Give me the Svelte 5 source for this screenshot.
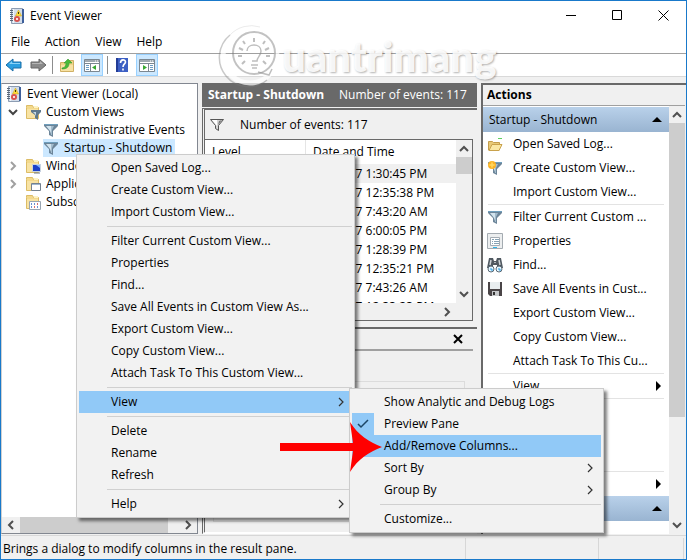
<script lang="ts">
	type MenuItem = {
		label?: string;
		separator?: boolean;
		submenu?: boolean;
		active?: boolean;
		checked?: boolean;
		icon?: string;
	};

	const separator: MenuItem = { separator: true };

	const menus = ["File", "Action", "View", "Help"];

	const tree = [
		{ label: "Event Viewer (Local)", level: 0, icon: "log" },
		{ label: "Custom Views", level: 1, icon: "folder-filter", open: true },
		{ label: "Administrative Events", level: 2, icon: "filter" },
		{ label: "Startup - Shutdown", level: 2, icon: "filter", selected: true },
		{ label: "Windows Logs", level: 1, icon: "folder-screen", open: false },
		{ label: "Applications and Services", level: 1, icon: "folder-window", open: false },
		{ label: "Subscriptions", level: 1, icon: "folder-calendar" },
	];

	const events = [
		"4/7/2017 1:30:45 PM",
		"4/6/2017 12:35:38 PM",
		"4/6/2017 7:43:20 AM",
		"4/5/2017 6:00:05 PM",
		"4/5/2017 1:28:39 PM",
		"4/5/2017 12:35:21 PM",
		"4/5/2017 7:43:26 AM",
		"4/4/2017 12:33:23 PM",
	];

	const actions: MenuItem[] = [
		{ label: "Open Saved Log...", icon: "open" },
		{ label: "Create Custom View...", icon: "filter-new" },
		{ label: "Import Custom View..." },
		separator,
		{ label: "Filter Current Custom ...", icon: "filter" },
		{ label: "Properties", icon: "properties" },
		{ label: "Find...", icon: "find" },
		{ label: "Save All Events in Cust...", icon: "save" },
		{ label: "Export Custom View..." },
		{ label: "Copy Custom View..." },
		{ label: "Attach Task To This Cu..." },
		separator,
		{ label: "View", submenu: true },
		separator,
		{ label: "Delete" },
		{ label: "Rename" },
		{ label: "Refresh" },
		separator,
		{ label: "Help", submenu: true },
	];

	const contextMenu: MenuItem[] = [
		{ label: "Open Saved Log..." },
		{ label: "Create Custom View..." },
		{ label: "Import Custom View..." },
		separator,
		{ label: "Filter Current Custom View..." },
		{ label: "Properties" },
		{ label: "Find..." },
		{ label: "Save All Events in Custom View As..." },
		{ label: "Export Custom View..." },
		{ label: "Copy Custom View..." },
		{ label: "Attach Task To This Custom View..." },
		separator,
		{ label: "View", submenu: true, active: true },
		separator,
		{ label: "Delete" },
		{ label: "Rename" },
		{ label: "Refresh" },
		separator,
		{ label: "Help", submenu: true },
	];

	const viewMenu: MenuItem[] = [
		{ label: "Show Analytic and Debug Logs" },
		{ label: "Preview Pane", checked: true },
		{ label: "Add/Remove Columns...", active: true },
		{ label: "Sort By", submenu: true },
		{ label: "Group By", submenu: true },
		separator,
		{ label: "Customize..." },
	];
</script>

{#snippet folder()}
	<path d="M1.5 3.5v-2h6l1 2h5v11h-12z" fill="#f3d98c" stroke="#dcbc66" />
	<path d="M2 5h11v9H2z" fill="#f8e3a4" />
	<path d="M9 2h4v2H9z" fill="#fff3c4" />
{/snippet}

{#snippet funnel()}
	<path d="M1 2h14v2l-5 5v6l-4-2V9L1 4z" fill="#6c8599" />
	<path d="M3 4h5v8L7 9z" fill="#d3e4ee" />
	<path d="M8 4h3L9 8v5H8z" fill="#a3bccd" />
	<path d="M1 2.5h14" stroke="#6f9fbd" />
{/snippet}

{#snippet icon(name: string)}
	<svg class="icon" viewBox="0 0 16 16" width="16" height="16" fill="none" aria-hidden="true">
		{#if name === "log"}
			<path d="M2.5.5h11v15h-11z" fill="#d3ddea" stroke="#8d9db3" />
			<path d="M13 1h2v14h-2z" fill="#3d5f9b" />
			<path d="M4.500 1v14" stroke="#f2f6fa" />
			<path d="M1 2.500h3M1 4.500h3M1 6.500h3M1 8.500h3M1 10.500h3M1 12.500h3" stroke="#5b6878" />
			<path d="M9.500 2l3 6h-6z" fill="#ffdc3a" stroke="#d0a920" stroke-width=".6" />
			<path d="M9.500 4v2" stroke="#443b00" />
			<circle cx="8" cy="11" r="3" fill="#d8534f" />
			<path d="M7 10l2 2m0-2l-2 2" stroke="#fff" stroke-width=".8" />
		{:else if name === "filter"}
			{@render funnel()}
		{:else if name === "filter-gray"}
			<path d="M1.500 2.500h13l-5 6v5l-3-2v-3z" fill="#d5d5d5" stroke="#555" />
			<path d="M3 3h5v6z" fill="#fff" />
			<path d="M10 4l3-1-4 5z" fill="#777" />
		{:else if name === "filter-new"}
			{@render funnel()}
			<circle cx="5" cy="5" r="4" fill="#fbb124" />
			<path d="M5 1l1 3 3 1-3 1-1 3-1-3-3-1 3-1z" fill="#ffd55c" />
		{:else if name === "folder-filter"}
			{@render folder()}
			<path d="M6 6h10v2l-3 3v5l-3-2v-3L6 8z" fill="#5e788c" />
			<path d="M8 8h3v4l-1-2z" fill="#c6dbe8" />
		{:else if name === "folder-screen"}
			{@render folder()}
			<path d="M7.500 6.500h8v7h-8z" fill="#1b40c8" stroke="#c8d3de" />
			<path d="M11 7l4 3V7z" fill="#7fb2ff" />
			<path d="M9 15h6" stroke="#6d7883" />
		{:else if name === "folder-window"}
			{@render folder()}
			<path d="M6.500 7.500h9v7h-9z" fill="#fff" stroke="#74818e" />
			<path d="M7 8.500h8" stroke="#9fb7d0" />
		{:else if name === "folder-calendar"}
			{@render folder()}
			<path d="M4.500 7.500h11v8h-11z" fill="#fff" stroke="#9aa6b2" />
			<path d="M6 10h1m2 0h1m-4 3h1m5 0h1" stroke="#3b6fc4" stroke-width="1.5" />
			<path d="M12 10h1m-4 3h1" stroke="#d43d3d" stroke-width="1.5" />
		{:else if name === "open"}
			<path d="M1.500 14V5.500h4l1 1h6V14z" fill="#e8c976" stroke="#c49d4c" />
			<path d="M2 14.500l3-6h10l-3 6z" fill="#fae7a4" stroke="#c9a24c" />
			<path d="M11 2.500h4" stroke="#5fcf5f" />
		{:else if name === "properties"}
			<path d="M.5.5h15v15H.5z" fill="#eceeef" stroke="#a4abb1" />
			<path d="M3.500 4.500h9v8h-9z" fill="#fff" stroke="#a4acb3" />
			<path d="M5 6.500h2m1 0h4M5 8.500h1m1 0h5M5 10.500h1m1 0h5" stroke="#87a2b4" />
			<path d="M6 14.500h4" stroke="#2bb2e8" />
		{:else if name === "find"}
			<path d="M2 1h4l1 3h2l1-3h4l2 10h-6V8H6v3H0z" fill="#4f5860" />
			<path d="M4 3L3 8m9-5l1 5" stroke="#cfd4d8" stroke-width="1.5" />
			<path d="M7 5.500h2" stroke="#aeb5ba" />
			<circle cx="4" cy="12" r="3" fill="#e4f5ff" stroke="#5b6a75" />
			<circle cx="12" cy="12" r="3" fill="#e4f5ff" stroke="#5b6a75" />
			<path d="M3 12h2v2m6-2h2v2" stroke="#1d9be6" />
		{:else if name === "save"}
			<path d="M1 1h14v14H3l-2-2z" fill="#4a4547" />
			<path d="M3 1h10v7H3z" fill="#e9eef0" />
			<path d="M5 10h7v5H5z" fill="#c6c8ca" />
			<path d="M6 11h2v3H6z" fill="#333" />
		{:else if name === "up-folder"}
			<path d="M1.500 5.500h6l1-2h6v11h-13z" fill="#f0d58a" stroke="#d0b064" />
			<path d="M2 8h12v6H2z" fill="#f7e2a4" />
			<path d="M3 11c3 0 4-3 4-5H5l4-4 4 4h-3c0 4-2 6-7 6z" fill="#48b93a" stroke="#3a9a30" stroke-width=".6" />
		{:else if name === "help"}
			<path d="M2 1h12v14H2z" fill="#3c5fc4" />
			<path d="M2 1h2v14H2z" fill="#223c96" />
			<path d="M6.500 6c0-4 5-4 5-1 0 2-2.500 2-2.500 5M9 11.500v2" stroke="#fff" stroke-width="1.6" />
		{/if}
	</svg>
{/snippet}

{#snippet navArrow(fill: string, stroke: string, light: string)}
	<svg viewBox="0 0 18 16" width="18" height="16" aria-hidden="true">
		<path d="M1 8l7-6v3h8v6H8v3z" {fill} {stroke} stroke-linejoin="round" />
		<path d="M4 7l3-3v2h8v1z" fill={light} />
	</svg>
{/snippet}

{#snippet paneToggle(side: string)}
	<svg viewBox="0 0 16 14" width="16" height="14" fill="none" aria-hidden="true">
		<path d="M.5 1.5h15v12H.5z" fill="#fff" stroke="#7b8791" />
		<path d="M1 3h14" stroke="#9fa9b1" stroke-width="2" />
		<path d="M11 3h1m1 0h1" stroke="#fff" />
		<path d="M1 5.5h14" stroke="#7b8791" />
		{#if side === "left"}
			<path d="M6.5 6v7" stroke="#7b8791" />
			<path d="M2 7.5h3M2 9.5h3M2 11.5h3" stroke="#6b9cc4" />
			<path d="M12 7v5L8 9.5z" fill="#38a832" />
		{:else}
			<path d="M9.5 6v7" stroke="#7b8791" />
			<path d="M11 7.5h3M11 9.5h3M11 11.5h3" stroke="#6b9cc4" />
			<path d="M4 7v5l4-2.5z" fill="#38a832" />
		{/if}
	</svg>
{/snippet}

{#snippet chevron(direction: string)}
	<svg class="chevron {direction}" viewBox="0 0 10 10" width="10" height="10" aria-hidden="true">
		<path d="M3 1l4 4-4 4" fill="none" stroke="currentColor" stroke-width="2" />
	</svg>
{/snippet}

{#snippet popup(items: MenuItem[])}
	{#each items as item}
		{#if item.separator}
			<hr />
		{:else}
			<button type="button" role="menuitem" class:active={item.active}>
				<span class="gutter" class:checked={item.checked}>
					{#if item.checked}
						<svg viewBox="0 0 12 12" width="12" height="12" aria-hidden="true">
							<path d="M1 6l3 3 7-7" fill="none" stroke="#1c4566" stroke-width="1.5" />
						</svg>
					{/if}
				</span>
				<span class="label">{item.label}</span>
				{#if item.submenu}
					<svg viewBox="0 0 10 10" width="10" height="10" aria-hidden="true">
						<path d="M3 1l4 4-4 4" fill="none" stroke="#333" stroke-width="1.2" />
					</svg>
				{/if}
			</button>
		{/if}
	{/each}
{/snippet}

<div class="window">
	<header class="titlebar">
		{@render icon("log")}
		<h1>Event Viewer</h1>
		<div class="controls">
			<button type="button" aria-label="Minimize">
				<svg viewBox="0 0 11 11" width="11" height="11"><path d="M0 5.5h10" stroke="#000" /></svg>
			</button>
			<button type="button" aria-label="Maximize">
				<svg viewBox="0 0 11 11" width="11" height="11"><path d="M.5.5h9v9h-9z" fill="none" stroke="#000" /></svg>
			</button>
			<button type="button" aria-label="Close">
				<svg viewBox="0 0 11 11" width="11" height="11"><path d="M.5.5l10 10m0-10l-10 10" stroke="#000" /></svg>
			</button>
		</div>
	</header>

	<nav class="menubar" aria-label="Main menu">
		{#each menus as menu}
			<button type="button">{menu}</button>
		{/each}
	</nav>

	<div class="toolbar">
		<button type="button" aria-label="Back">{@render navArrow("#2b9fe0", "#1b6ea8", "#8bd3f7")}</button>
		<button type="button" aria-label="Forward">
			<span class="flip">{@render navArrow("#8a8a8a", "#666", "#b5b5b5")}</span>
		</button>
		<span class="divider"></span>
		<button type="button" aria-label="Up one level">{@render icon("up-folder")}</button>
		<button type="button" class="pressed" aria-label="Console tree">{@render paneToggle("left")}</button>
		<span class="divider"></span>
		<button type="button" aria-label="Help">{@render icon("help")}</button>
		<button type="button" class="pressed" aria-label="Action pane">{@render paneToggle("right")}</button>
	</div>

	<main>
		<section class="tree-pane">
			<ul class="tree">
				{#each tree as node}
					<li class="level-{node.level}">
						{#if node.level === 1}
							<span class="twisty" class:closed={!node.open}>
								{#if node.open !== undefined}{@render chevron(node.open ? "down" : "right")}{/if}
							</span>
						{/if}
						<span class="node" class:selected={node.selected}>
							{@render icon(node.icon)}
							{node.label}
						</span>
					</li>
				{/each}
			</ul>
			<div class="hscroll">
				{@render chevron("left")}
				<span class="thumb"></span>
				{@render chevron("right")}
			</div>
		</section>

		<section class="results">
			<h2><strong>Startup - Shutdown</strong> <span>Number of events: 117</span></h2>

			<div class="list-pane">
				<div class="summary">
					{@render icon("filter-gray")}
					Number of events: 117
				</div>
				<div class="grid">
					<div class="rows">
						<table>
							<thead>
								<tr><th class="level">Level</th><th>Date and Time</th></tr>
							</thead>
							<tbody>
								{#each events as date, i}
									<tr class:current={i === 0}><td>Information</td><td>{date}</td></tr>
								{/each}
							</tbody>
						</table>
					</div>
					<div class="vscroll">
						{@render chevron("up")}
						<span class="thumb short"></span>
						{@render chevron("down")}
					</div>
					<div class="list-hscroll">{@render chevron("right")}</div>
				</div>
			</div>

			<div class="preview-pane">
				<div class="preview-head">
					<button type="button" aria-label="Close preview">
						<svg viewBox="0 0 10 10" width="10" height="10"><path d="M1 1l8 8m0-8L1 9" stroke="#000" stroke-width="2" /></svg>
					</button>
				</div>
				<div class="preview-box"></div>
			</div>
		</section>

		<aside class="actions">
			<h2>Actions</h2>
			<div class="actions-body">
				<div class="action-list">
					<h3>Startup - Shutdown <span class="collapse"></span></h3>
					{#each actions as action}
						{#if action.separator}
							<hr />
						{:else}
							<button type="button">
								<span class="action-icon">{#if action.icon}{@render icon(action.icon)}{/if}</span>
								<span class="label">{action.label}</span>
								{#if action.submenu}<span class="expand"></span>{/if}
							</button>
						{/if}
					{/each}
					<h3>Event 1074 <span class="collapse"></span></h3>
				</div>
				<div class="vscroll">
					{@render chevron("up")}
					<span class="thumb long"></span>
					{@render chevron("down")}
				</div>
			</div>
		</aside>
	</main>

	<footer>
		<span class="message">Brings a dialog to modify columns in the result pane.</span>
		<span class="cell"></span>
		<span class="cell last"></span>
	</footer>

	<div class="watermark" aria-hidden="true">
		<svg viewBox="0 0 64 66" width="64" height="66" fill="none">
			<circle cx="32" cy="34" r="27" stroke="#fff" stroke-opacity=".7" stroke-width="5" />
			<g stroke="#777">
				<path d="M12 13a29 29 0 0 0 37 45" stroke-opacity=".4" stroke-width="1.5" />
				<path d="M12 13a29 29 0 0 1 30-8" stroke-opacity=".15" />
				<circle cx="36" cy="31" r="21" stroke-opacity=".45" stroke-width="2" />
			</g>
			<g stroke="#888" stroke-opacity=".55" stroke-width="2">
				<path d="M36 20v-4M27 22l-2-3M45 22l2-3M25 28l-4-2M47 28l4-2M24 34h-4M48 34h4M27 39l-3 3M45 39l3 3" />
				<path d="M29 29c0-8 14-8 14 0 0 5-4 6-4 10h-5" stroke-width="1.5" />
				<path d="M33 43h7M34 46h5M40 50l11 3 3-6" stroke-width="1.5" />
			</g>
		</svg>
		<span>uantrimang</span>
	</div>

	<div class="popup context" role="menu">{@render popup(contextMenu)}</div>
	<div class="popup view" role="menu">{@render popup(viewMenu)}</div>

	<svg class="pointer" viewBox="0 0 102 52" width="102" height="52" aria-hidden="true">
		<path d="M0 22h73L70 1c8 13 19 20 32 25-13 5-24 12-32 25l3-21H0z" fill="#f00" />
	</svg>
</div>

<style>
	:global(body) {
		margin: 0;
	}

	.window {
		position: relative;
		box-sizing: border-box;
		display: flex;
		flex-direction: column;
		height: 100vh;
		border: 1px solid #1979ca;
		background: #fff;
		color: #000;
		font: 12px/18px "Open Sans", "Noto Sans", sans-serif;
		overflow: hidden;
	}

	button {
		display: flex;
		align-items: center;
		margin: 0;
		padding: 0;
		border: 0;
		background: transparent;
		color: inherit;
		font: inherit;
		text-align: left;
		white-space: nowrap;
	}

	svg {
		flex: none;
		display: block;
	}

	h1,
	h2,
	h3 {
		margin: 0;
		font: inherit;
	}

	.titlebar {
		display: flex;
		align-items: center;
		gap: 5px;
		height: 29px;
		padding-left: 8px;
	}

	.controls {
		display: flex;
		align-self: stretch;
		margin-left: auto;
	}

	.controls button {
		justify-content: center;
		width: 46px;
	}

	.menubar {
		display: flex;
		gap: 15px;
		height: 23px;
		padding-left: 10px;
	}

	.toolbar {
		box-sizing: border-box;
		display: flex;
		align-items: center;
		gap: 4px;
		height: 24px;
		padding-left: 3px;
		border-top: 1px solid #a0a0a0;
		border-bottom: 1px solid #d9d9d9;
	}

	.toolbar button {
		box-sizing: border-box;
		justify-content: center;
		width: 20px;
		height: 22px;
	}

	.toolbar .pressed {
		width: 22px;
		border: 1px solid #99d1ff;
		background: #cce8ff;
	}

	.divider {
		width: 1px;
		height: 18px;
		background: #8d8d8d;
	}

	.flip {
		transform: scaleX(-1);
	}

	main {
		flex: 1;
		min-height: 0;
		display: grid;
		grid-template-columns: 197px minmax(0, 1fr) 205px;
		column-gap: 4px;
		padding: 6px 0 1px;
		background: #f0f0f0;
	}

	.tree-pane {
		display: flex;
		flex-direction: column;
		min-width: 0;
		min-height: 0;
		border: 1px solid #828790;
		border-left-color: #d0d0d0;
		box-sizing: border-box;
		background: #fff;
	}

	.tree {
		flex: 1;
		margin: 0;
		padding: 1px 0 0 4px;
		list-style: none;
		overflow: hidden;
	}

	.tree li {
		display: flex;
		height: 18px;
		white-space: nowrap;
	}

	.level-2 {
		padding-left: 37px;
	}

	.twisty {
		display: grid;
		place-items: center start;
		width: 19px;
		padding-left: 2px;
		box-sizing: border-box;
		color: #444;
	}

	.twisty.closed {
		color: #a0a0a0;
	}

	.node {
		display: flex;
		align-items: center;
		gap: 5px;
		padding-right: 3px;
	}

	.node.selected {
		background: #cce8ff;
	}

	.chevron {
		color: #505050;
	}

	.twisty .chevron {
		color: inherit;
	}

	.chevron.down {
		transform: rotate(90deg);
	}

	.chevron.left {
		transform: rotate(180deg);
	}

	.chevron.up {
		transform: rotate(-90deg);
	}

	.hscroll {
		display: flex;
		align-items: center;
		height: 16px;
		padding: 0 4px;
		background: #f0f0f0;
	}

	.hscroll .thumb {
		width: 148px;
		height: 16px;
		margin: 0 auto 0 4px;
	}

	.thumb {
		background: #cdcdcd;
	}

	.results {
		display: grid;
		grid-template-rows: 24px 214px minmax(0, 1fr);
		min-width: 0;
		min-height: 0;
	}

	.results h2 {
		display: flex;
		align-items: center;
		gap: 15px;
		padding-left: 6px;
		background: #696969;
		color: #fff;
		white-space: nowrap;
	}

	.list-pane,
	.preview-pane {
		box-sizing: border-box;
		display: flex;
		flex-direction: column;
		min-height: 0;
		border-top: 2px solid #696969;
		border-left: 3px double #696969;
	}

	.list-pane {
		margin-top: 1px;
	}

	.summary {
		display: flex;
		align-items: center;
		gap: 15px;
		height: 29px;
		padding-left: 4px;
	}

	.grid {
		flex: 1;
		min-height: 0;
		display: grid;
		grid-template-columns: minmax(0, 1fr) 16px;
		grid-template-rows: minmax(0, 1fr) 17px;
		margin-right: 4px;
		border: 1px solid #696969;
		border-left-width: 0;
	}

	.rows {
		overflow: hidden;
		background: #fff;
	}

	table {
		width: 100%;
		border-collapse: collapse;
		table-layout: fixed;
	}

	th,
	td {
		height: 19px;
		padding: 0 0 0 7px;
		font-weight: normal;
		text-align: left;
		white-space: nowrap;
	}

	th {
		height: 24px;
	}

	.level {
		width: 93px;
		border-right: 1px solid #e5e5e5;
	}

	.current {
		background: #f0f0f0;
	}

	.vscroll {
		display: flex;
		flex-direction: column;
		align-items: center;
		padding: 4px 0;
		box-sizing: border-box;
		background: #f0f0f0;
	}

	.vscroll .thumb {
		width: 16px;
		margin: 3px 0 auto;
	}

	.vscroll .short {
		height: 17px;
	}

	.vscroll .long {
		height: 294px;
	}

	.list-hscroll {
		grid-column: 1 / -1;
		display: flex;
		align-items: center;
		justify-content: end;
		padding-right: 20px;
	}

	.preview-pane {
		margin-top: 6px;
		padding-right: 4px;
		border-bottom: 2px solid #fff;
	}

	.preview-head {
		display: flex;
		align-items: center;
		justify-content: end;
		height: 20px;
		padding-right: 10px;
		border-bottom: 2px solid #a0a0a0;
	}

	.preview-box {
		flex: 1;
		margin: 30px 8px 10px;
		border: 1px solid #dcdcdc;
	}

	.actions {
		display: flex;
		flex-direction: column;
		min-width: 0;
		min-height: 0;
		box-sizing: border-box;
		border-top: 2px solid #696969;
		border-left: 2px solid #696969;
		padding-right: 1px;
	}

	.actions h2 {
		height: 20px;
		padding-left: 4px;
		border-bottom: 1px solid #a0a0a0;
		font-weight: bold;
		line-height: 20px;
	}

	.actions-body {
		flex: 1;
		min-height: 0;
		display: grid;
		grid-template-columns: minmax(0, 1fr) 16px;
		background: #fff;
	}

	.action-list {
		padding-top: 1px;
		overflow: hidden;
	}

	.actions h3 {
		display: flex;
		align-items: center;
		justify-content: space-between;
		height: 25px;
		padding: 0 7px 0 6px;
		background: linear-gradient(#b9d1ea, #99b4d1);
	}

	.collapse {
		border: 5px solid transparent;
		border-top: 0;
		border-bottom-color: #000;
	}

	.expand {
		border: 5px solid transparent;
		border-right: 0;
		border-left-color: #000;
	}

	.action-list button {
		width: 100%;
		height: 24px;
		padding: 0 8px 0 4px;
	}

	.action-icon {
		width: 26px;
	}

	.label {
		flex: 1;
	}

	.action-list hr {
		height: 1px;
		margin: 0 5px;
		border: 0;
		background: #e3e3e3;
	}

	footer {
		box-sizing: border-box;
		display: flex;
		align-items: center;
		height: 24px;
		padding: 2px 2px 0;
		border-top: 1px solid #d7d7d7;
		background: #f0f0f0;
		white-space: nowrap;
	}

	.message {
		flex: 1;
	}

	.cell {
		align-self: stretch;
		width: 132px;
		border-left: 1px solid #d7d7d7;
	}

	.cell.last {
		width: 84px;
		border-right: 1px solid #d7d7d7;
	}

	.watermark {
		position: absolute;
		top: 21px;
		left: 217px;
		display: flex;
		color: rgb(255 255 255 / 90%);
		font: 900 42px/68px Lato, sans-serif;
		text-shadow: 1px 1px 2px rgb(0 0 0 / 30%);
		pointer-events: none;
	}

	.popup {
		position: absolute;
		box-sizing: border-box;
		padding: 2px;
		border: 1px solid #ccc;
		background: #f2f2f2;
		box-shadow: 3px 3px 3px rgb(0 0 0 / 50%);
	}

	.context {
		top: 153px;
		left: 75px;
		width: 279px;
	}

	.view {
		top: 387px;
		left: 348px;
		width: 255px;
	}

	.popup button {
		width: 100%;
		height: 22px;
		padding-right: 6px;
	}

	.popup .active {
		background: #91c9f7;
	}

	.gutter {
		display: grid;
		place-items: center;
		width: 22px;
		height: 22px;
		margin-right: 10px;
	}

	.gutter.checked {
		background: #91c9f7;
	}

	.popup hr {
		height: 1px;
		margin: 3px 0 3px 28px;
		border: 0;
		background: #d0d0d0;
	}

	.pointer {
		position: absolute;
		top: 420px;
		left: 279px;
	}
</style>
